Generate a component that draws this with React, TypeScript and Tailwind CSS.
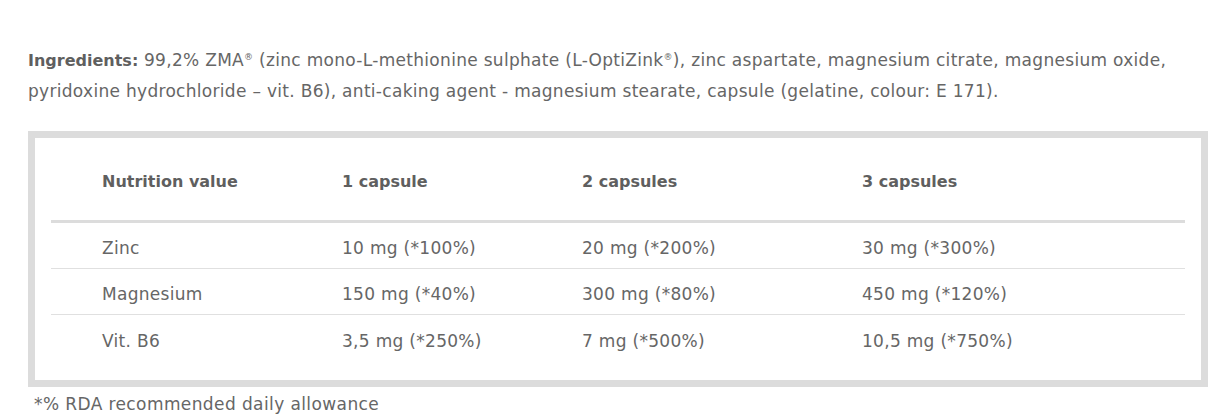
const rows = [
  ['Zinc', '10 mg (*100%)', '20 mg (*200%)', '30 mg (*300%)'],
  ['Magnesium', '150 mg (*40%)', '300 mg (*80%)', '450 mg (*120%)'],
  ['Vit. B6', '3,5 mg (*250%)', '7 mg (*500%)', '10,5 mg (*750%)'],
];

const cols = 'grid grid-cols-[240px_240px_280px_1fr]';

function Reg() {
  return <span className="relative -top-[6px] text-[9px] leading-none">®</span>;
}

export default function App() {
  return (
    <div
      className="bg-white text-[#666] text-[17px] tracking-[0.4px] pl-[28px] pt-[45px] h-[420px] overflow-hidden"
      style={{ fontFamily: '"DejaVu Sans", "Liberation Sans", sans-serif' }}
    >
      <p className="leading-[30px] w-[1170px] whitespace-nowrap tracking-[0.3px]">
        <strong className="font-bold text-[16px] tracking-normal text-[#5f5f5f]">Ingredients:</strong> 99,2% ZMA
        <Reg /> (zinc mono-L-methionine sulphate (L-OptiZink<Reg />), zinc aspartate, magnesium
        citrate, magnesium oxide,
        <br />
        pyridoxine hydrochloride – vit. B6), anti-caking agent - magnesium stearate, capsule
        (gelatine, colour: E 171).
      </p>

      <div className="mt-[25px] w-[1180px] border-[7px] border-[#dcdcdc] px-[16px] pb-[19px]">
        <div className={`${cols} h-[85px] pt-[6px] items-center border-b-[3px] border-[#dcdcdc] font-bold text-[16px] tracking-normal text-[#5f5f5f]`}>
          <div className="pl-[51px]">Nutrition value</div>
          <div className="pl-[51px]">1 capsule</div>
          <div className="pl-[51px]">2 capsules</div>
          <div className="pl-[51px]">3 capsules</div>
        </div>
        {rows.map((r, i) => (
          <div
            key={r[0]}
            className={`${cols} h-[46px] pt-[7px] items-center tracking-[0.3px] ${i < rows.length - 1 ? 'border-b border-[#e0e0e0]' : ''}`}
          >
            {r.map((c) => (
              <div key={c} className="pl-[51px]">
                {c}
              </div>
            ))}
          </div>
        ))}
      </div>

      <p className="pl-[6px] mt-[6px] leading-[22px]">*% RDA recommended daily allowance</p>
    </div>
  );
}
